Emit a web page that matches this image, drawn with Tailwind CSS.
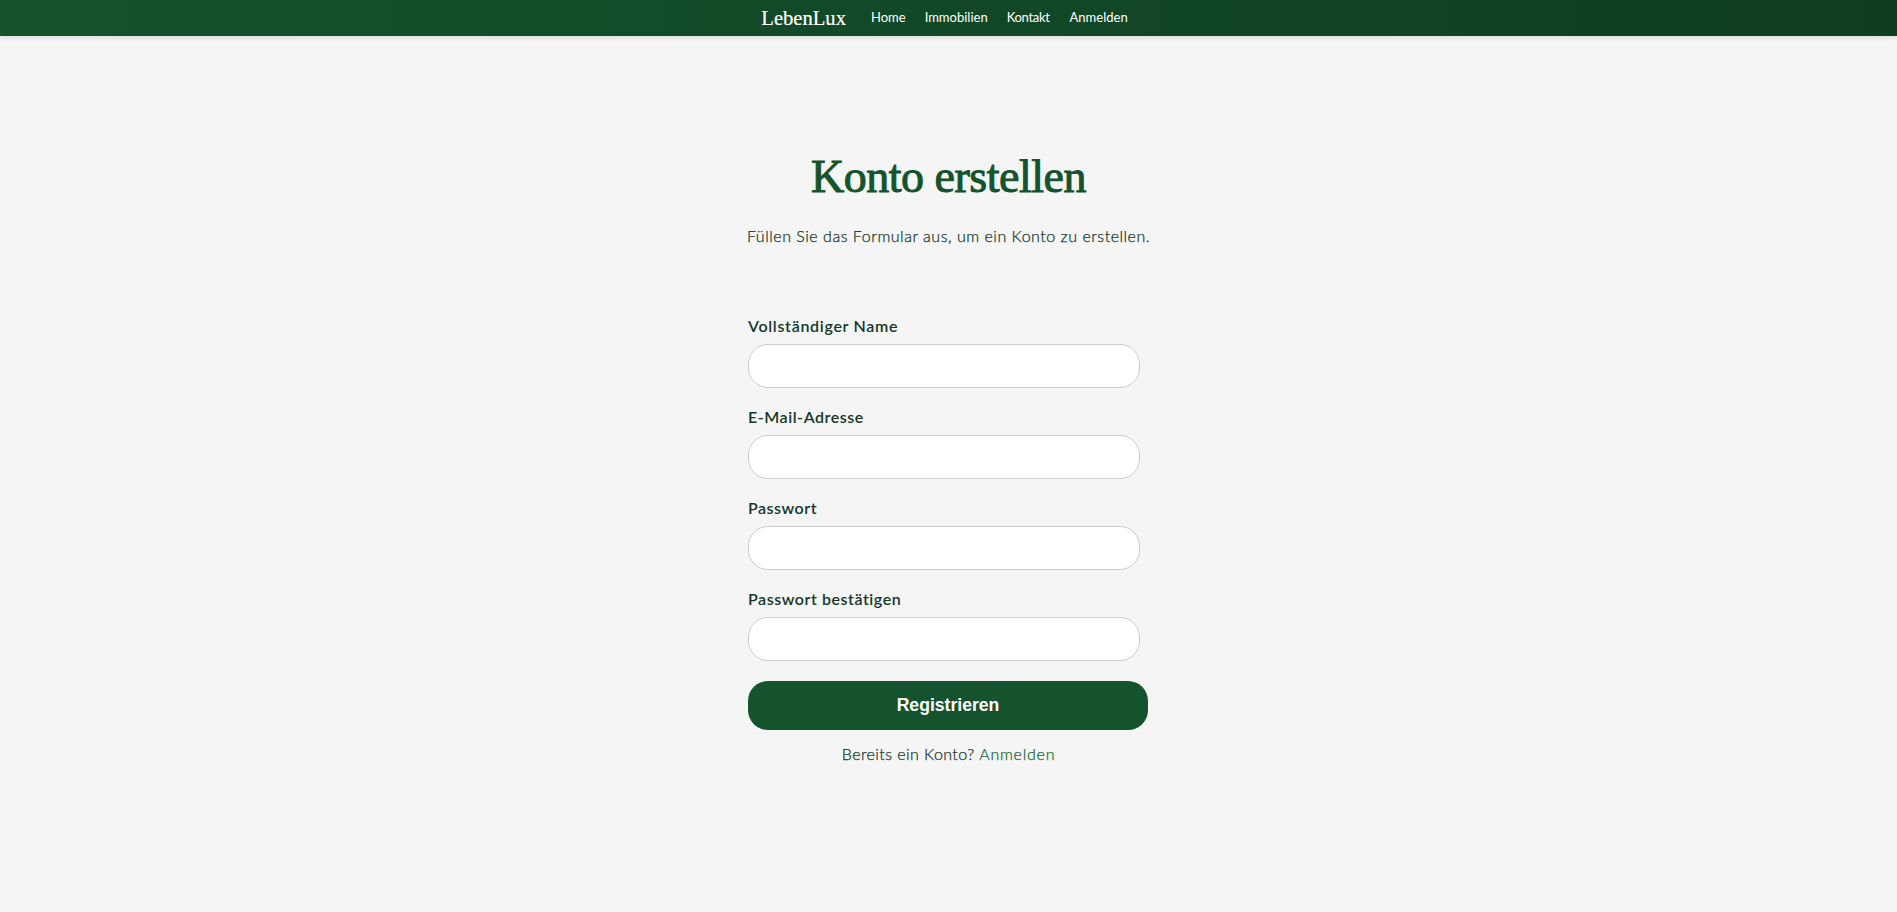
<!DOCTYPE html>
<html lang="de">
<head>
<meta charset="utf-8">
<title>LebenLux</title>
<script src="https://cdn.jsdelivr.net/npm/@tailwindcss/browser@4"></script>
</head>
<body class="min-h-screen bg-[#f5f5f5] font-['Lato','Liberation_Sans',sans-serif] text-[#14372a]">
<header class="h-9 bg-gradient-to-r from-[#14532d] to-[#0f3d22] shadow-[0_2px_4px_rgba(0,0,0,0.1)]">
  <nav class="flex h-full items-center justify-center gap-[25px] pr-[8px] text-white">
    <a class="font-['Liberation_Serif',serif] text-[20.6px] leading-none [-webkit-text-stroke:0.2px_#ffffff]">LebenLux</a>
    <ul class="flex items-center gap-[19px] text-[13px]">
      <li>Home</li>
      <li>Immobilien</li>
      <li class="tracking-[-0.3px]">Kontakt</li>
      <li class="ml-px">Anmelden</li>
    </ul>
  </nav>
</header>
<main class="mx-auto w-[401px] pt-[111px] text-center">
  <h1 class="font-['Liberation_Serif',serif] text-[46px] leading-[60px] font-normal tracking-[-0.5px] text-[#14532d] [-webkit-text-stroke:1px_#14532d]">Konto erstellen</h1>
  <p class="-mx-4 mt-[17px] text-base leading-6 font-light tracking-[0.52px] text-[#14372a] [-webkit-text-stroke:0.25px_#14372a]">Füllen Sie das Formular aus, um ein Konto zu erstellen.</p>
  <form class="mt-[66px] text-left">
    <div class="mb-[17px]">
      <label class="mb-[6px] block text-base leading-6 font-semibold tracking-[0.7px]">Vollständiger Name</label>
      <input type="text" class="block h-[44px] w-[392px] rounded-[20px] border border-[#cccccc] bg-white">
    </div>
    <div class="mb-[17px]">
      <label class="mb-[6px] block text-base leading-6 font-semibold tracking-[0.55px]">E-Mail-Adresse</label>
      <input type="email" class="block h-[44px] w-[392px] rounded-[20px] border border-[#cccccc] bg-white">
    </div>
    <div class="mb-[17px]">
      <label class="mb-[6px] block text-base leading-6 font-semibold tracking-[0.5px]">Passwort</label>
      <input type="password" class="block h-[44px] w-[392px] rounded-[20px] border border-[#cccccc] bg-white">
    </div>
    <div class="mb-[20px]">
      <label class="mb-[6px] block text-base leading-6 font-semibold tracking-[0.55px]">Passwort bestätigen</label>
      <input type="password" class="block h-[44px] w-[392px] rounded-[20px] border border-[#cccccc] bg-white">
    </div>
    <button type="button" class="block h-[49px] w-[400px] rounded-[20px] bg-[#14532d] font-['Liberation_Sans',sans-serif] text-[17.6px] font-bold text-white">Registrieren</button>
  </form>
  <p class="mt-[12px] text-base leading-6 font-light tracking-[0.42px] text-[#14372a] [-webkit-text-stroke:0.25px_#14372a]">Bereits ein Konto? <a class="tracking-[0.75px] text-[#166534] [-webkit-text-stroke:0.25px_#166534]">Anmelden</a></p>
</main>
</body>
</html>
